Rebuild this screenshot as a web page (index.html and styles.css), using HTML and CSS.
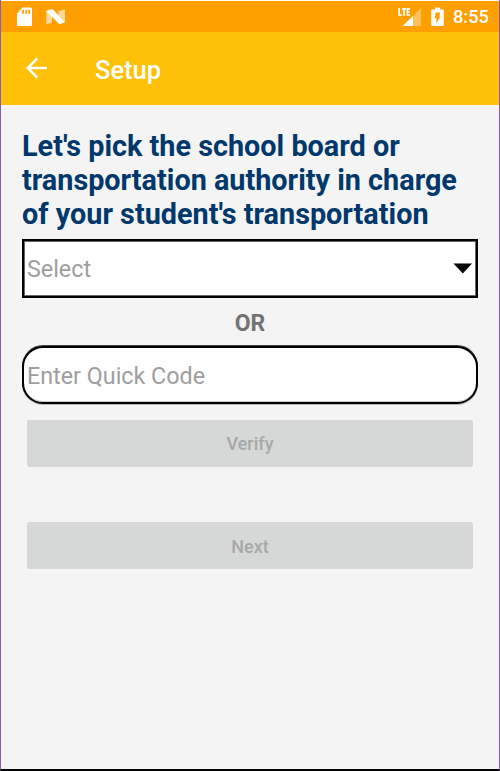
FILE: index.html
```html
<!DOCTYPE html>
<html>
  <head>
    <meta charset="utf-8" />
    <title>Setup</title>
    <link rel="stylesheet" href="styles.css">
  </head>
  <body>
    <div id="screen">
      <div id="status">
        <svg class="sd" width="16" height="19" viewBox="0 0 16 19">
          <path fill="#fff" d="M5.500 0.500h8q1.500 0 1.500 1.500v15.500q0 1.500-1.500 1.500h-12q-1.500 0-1.500-1.500V6.500z" />
          <path fill="#ffa000" d="M5.200 2.700h1.800v4h-1.800zM8.300 2.700h1.800v4h-1.800zM11.300 2.700h1.800v4h-1.800z" />
        </svg>
        <svg class="nougat" width="20" height="16" viewBox="0 0 20 16">
          <path fill="#fff" fill-opacity="0.6" d="M0.300 1.500L6 4v10L0.300 15zM12.500 2L19 0.500v13L12.500 11z" />
          <path fill="#fff" d="M0.800 1.500L5.500 0.300Q6.500 0 7.300 0.800L18.800 13.300l-4.300 1.800q-1 0.300-1.800-0.500L1 3z" />
        </svg>
        <svg class="signal" width="24" height="20" viewBox="0 0 24 20">
          <path fill="#fff" fill-opacity="0.35" d="M23 1v18h-8V9z" />
          <path fill="#fff" d="M15 9V19H4.500z" />
          <path fill="none" stroke="#fff" stroke-width="1.700" d="M1.100 1v7h2.700M4 1.800h4M6 1.800v7M12 1.800H9.400v6.200H12M9.400 4.800h2.200" />
        </svg>
        <svg class="battery" width="13" height="19" viewBox="0 0 13 19">
          <path fill="#fff" d="M4 0.500h5v2h2.800q1 0 1 1v14.500q0 1-1 1H1.200q-1 0-1-1V3.500q0-1 1-1H4z" />
          <path fill="#ffa000" d="M4.700 5.500h4.500L8 9.500h1.700L4.900 16.500l0.800-5H3.600z" />
        </svg>
        <span id="time">8:55</span>
      </div>
      <div id="toolbar">
        <svg width="22" height="22" viewBox="0 0 22 22">
          <path fill="none" stroke="#fff" stroke-width="2.500" d="M21 11H2M11.200 1.500L1.700 11l9.500 9.500" />
        </svg>
        <span id="title">Setup</span>
      </div>
      <div id="content">
        <h1>Let's pick the school board or<br />transportation authority in charge<br />of your student's transportation</h1>
        <div class="field">
          <span>Select</span>
          <svg width="20" height="11" viewBox="0 0 20 11">
            <path d="M0.500 0.500h18.500L9.800 10.500z" />
          </svg>
        </div>
        <p id="or">OR</p>
        <div class="field round"><span>Enter Quick Code</span></div>
        <div class="button">Verify</div>
        <div class="button next">Next</div>
      </div>
    </div>
  </body>
</html>
```
FILE: styles.css
```css
body {
  margin: 0;
  background-color: #fff;
  font-family: Roboto, sans-serif;
}

#screen {
  box-sizing: border-box;
  height: 771px;
  border-left: 1px solid #855cb0;
  border-right: 1px solid #855cb0;
  border-bottom: 2px solid #000;
  padding-top: 1px;
}

#status {
  display: flex;
  height: 31px;
  background-color: #ffa000;
  color: #fff;
}
.sd {
  margin: 6px 0 0 16px;
}
.nougat {
  margin: 8px 0 0 13px;
}
.signal {
  margin: 6px 0 0 auto;
}
.battery {
  margin: 6px 0 0 9px;
}
#time {
  width: 36px;
  margin: 0 10px 0 9px;
  font-size: 18.2px;
  font-weight: 500;
  line-height: 32px;
}

#toolbar {
  display: flex;
  align-items: center;
  height: 73px;
  padding-left: 25px;
  background-color: #ffc107;
}
#toolbar svg {
  margin-bottom: 1px;
}
#title {
  margin: 2px 0 0 47px;
  color: #fff;
  font-size: 25.5px;
  font-weight: 500;
}

#content {
  box-sizing: border-box;
  height: 664px;
  padding: 24px 21px 0;
  background-color: #f4f4f4;
}
h1 {
  margin: 0;
  color: #00386b;
  font-size: 28.8px;
  font-weight: bold;
  line-height: 34px;
  white-space: nowrap;
}
.field {
  display: flex;
  align-items: center;
  justify-content: space-between;
  box-sizing: border-box;
  height: 59px;
  margin-top: 8px;
  padding: 0 3px;
  border: 2px solid #000;
  box-shadow: inset 0 0 0 1px rgba(0, 0, 0, 0.6);
  background-color: #fff;
  color: #9e9e9e;
  font-size: 23.3px;
}
#or {
  margin: 11px 0 8px;
  color: #737373;
  font-size: 23px;
  font-weight: bold;
  line-height: 29px;
  text-align: center;
}
.round {
  height: 58px;
  margin-top: 0;
  padding-top: 2px;
  border-radius: 21px;
  box-shadow: 0 -1px 0 rgba(0, 0, 0, 0.75), 0 1px 0 rgba(0, 0, 0, 0.25), inset 0 -1px 0 rgba(0, 0, 0, 0.2);
}
.button {
  height: 47px;
  margin: 16px 5px 0;
  border-radius: 2px;
  background-color: #d6d8d7;
  color: #a6a8a7;
  font-size: 18px;
  font-weight: 500;
  line-height: 48px;
  text-align: center;
}
.next {
  margin-top: 55px;
  line-height: 49px;
}
```
